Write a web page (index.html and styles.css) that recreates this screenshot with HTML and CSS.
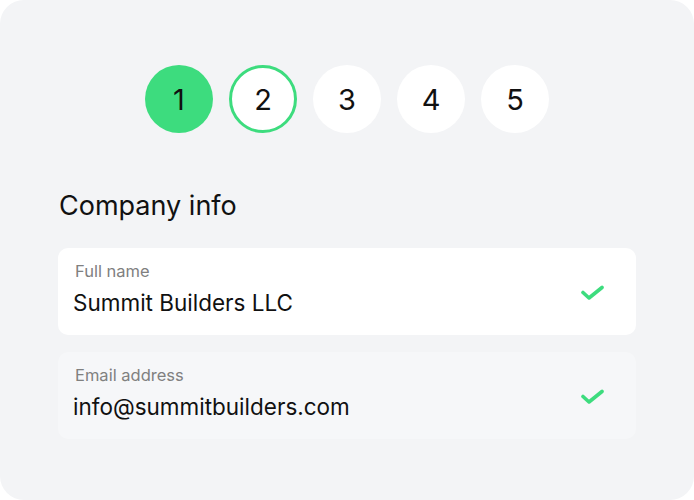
FILE: index.html
```html
<!DOCTYPE html>
<html lang="en">
<head>
    <meta name="viewport" content="width=device-width, initial-scale=1.0">
    <title>Company info</title>
    <link rel="stylesheet" href="styles.css">
</head>
<body>
    <div class="card">
        <ol class="steps">
            <li class="step done">1</li>
            <li class="step current">2</li>
            <li class="step">3</li>
            <li class="step">4</li>
            <li class="step">5</li>
        </ol>
        <h2>Company info</h2>
        <div class="field">
            <div class="field-text">
                <span class="field-label">Full name</span>
                <span class="field-value">Summit Builders LLC</span>
            </div>
            <svg class="check" width="24" height="24" viewBox="0 0 24 24">
                <path d="M2 12.5 L8 18 L21 7.5" fill="none" stroke="#3ddc7e" stroke-width="3.6" stroke-linecap="round" stroke-linejoin="round"/>
            </svg>
        </div>
        <div class="field faded">
            <div class="field-text">
                <span class="field-label">Email address</span>
                <span class="field-value">info@summitbuilders.com</span>
            </div>
            <svg class="check" width="24" height="24" viewBox="0 0 24 24">
                <path d="M2 12.5 L8 18 L21 7.5" fill="none" stroke="#3ddc7e" stroke-width="3.6" stroke-linecap="round" stroke-linejoin="round"/>
            </svg>
        </div>
    </div>
</body>
</html>
```

FILE: styles.css
```css
body {
    margin: 0;
    background: white;
    font-family: Inter, "Noto Sans", sans-serif;
    color: #111;
}
.card {
    background: #f3f4f6;
    width: 694px;
    height: 500px;
    box-sizing: border-box;
    border-radius: 24px;
    padding: 65px 58px 0;
}
.steps {
    list-style: none;
    margin: 0;
    padding: 0;
    display: flex;
    justify-content: center;
    gap: 16px;
}
.step {
    width: 68px;
    height: 68px;
    box-sizing: border-box;
    border-radius: 50%;
    background: white;
    display: flex;
    align-items: center;
    justify-content: center;
    font-size: 29px;
}
.step.done {
    background: #3ddc7e;
}
.step.current {
    border: 3px solid #3ddc7e;
}
h2 {
    margin: 57px 0 26px 1px;
    font-size: 27px;
    line-height: 32px;
    font-weight: 400;
}
.field {
    background: white;
    border-radius: 10px;
    height: 87px;
    box-sizing: border-box;
    padding: 13px 31px 0 15px;
    display: flex;
    align-items: center;
    margin-bottom: 17px;
}
.field.faded {
    background: rgba(255, 255, 255, 0.3);
}
.field-text {
    flex: 1;
    display: flex;
    flex-direction: column;
    align-self: flex-start;
}
.field-label {
    font-size: 16.5px;
    line-height: 20px;
    color: #808080;
    padding-left: 2px;
}
.field-value {
    font-size: 22.5px;
    line-height: 28px;
    margin-top: 8px;
}
.check {
    margin-top: -12px;
}
```
